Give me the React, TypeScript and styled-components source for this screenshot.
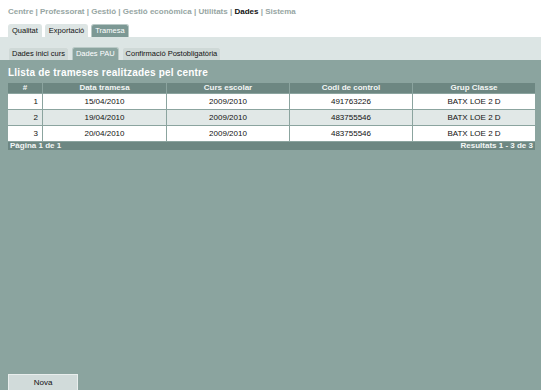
import React from "react";
import styled, { createGlobalStyle } from "styled-components";

const Global = createGlobalStyle`
  html, body { margin: 0; padding: 0; height: 100%; }
  body { font-family: "Liberation Sans", Arial, sans-serif; background: #8ba49f; }
  #root { min-height: 100%; }
`;

const Page = styled.div`
  width: 541px;
  height: 390px;
  display: flex;
  flex-direction: column;
  background: #8ba49f;
  overflow: hidden;
`;

const TopArea = styled.div`
  background: #ffffff;
  padding: 5px 0 0 8px;
`;

const Nav = styled.div`
  font-size: 8px;
  font-weight: bold;
  color: #97a6a3;
  height: 13px;
  line-height: 13px;
`;

const NavItem = styled.span<{ $active?: boolean }>`
  color: ${(p) => (p.$active ? "#111" : "#97a6a3")};
`;

const Sep = styled.span`
  color: #97a6a3;
`;

const TabRow = styled.div`
  display: flex;
  gap: 3px;
  align-items: flex-end;
`;

const TopTabs = styled(TabRow)`
  margin-top: 6px;
`;

const Tab = styled.div<{ $active?: boolean }>`
  font-size: 7.5px;
  height: 12px;
  line-height: 12px;
  padding: 0 3px;
  border-radius: 3px 3px 0 0;
  background: ${(p) => (p.$active ? "#7c9894" : "#dde5e4")};
  color: ${(p) => (p.$active ? "#ffffff" : "#111")};
  border: 1px solid ${(p) => (p.$active ? "#b9c9c6" : "#dde5e4")};
  border-bottom: none;
`;

const SubBand = styled.div`
  background: #dce5e4;
  height: 23px;
  padding: 0 0 0 8px;
  display: flex;
  align-items: flex-end;
`;

const SubTab = styled(Tab)<{ $active?: boolean }>`
  background: ${(p) => (p.$active ? "#8ba49f" : "#cfd9d7")};
`;

const Main = styled.div`
  flex: 1;
  padding: 4px 7px 0 8px;
  display: flex;
  flex-direction: column;
`;

const Title = styled.div`
  color: #ffffff;
  font-weight: bold;
  font-size: 10px;
  letter-spacing: 0.2px;
  height: 17px;
  line-height: 17px;
`;

const Table = styled.table`
  margin-top: 2px;
  width: 527px;
  border-collapse: separate;
  border-spacing: 0 0;
  font-size: 8px;
  table-layout: fixed;
`;

const Th = styled.th`
  background: #6d8782;
  color: #f3f6f5;
  font-weight: bold;
  height: 10px;
  line-height: 10px;
  padding: 0;
  border-right: 1px solid #8ba49f;
  &:last-child { border-right: none; }
`;

const Td = styled.td<{ $alt?: boolean; $right?: boolean }>`
  background: ${(p) => (p.$alt ? "#e1e8e7" : "#ffffff")};
  color: #111;
  height: 15px;
  line-height: 15px;
  padding: 0 4px;
  text-align: ${(p) => (p.$right ? "right" : "center")};
  border-top: 1px solid #8ba49f;
  border-right: 1px solid #8ba49f;
  &:last-child { border-right: none; }
`;

const Footer = styled.td`
  background: #6d8782;
  color: #f3f6f5;
  font-weight: bold;
  height: 8px;
  line-height: 8px;
  padding: 0 2px;
  border-top: 1px solid #8ba49f;
`;

const FooterInner = styled.div`
  display: flex;
  justify-content: space-between;
`;

const Spacer = styled.div`
  flex: 1;
`;

const Button = styled.button`
  width: 70px;
  height: 16px;
  background: #d1dbda;
  border: 1px solid #e9eeed;
  border-bottom: none;
  font-family: "Liberation Sans", Arial, sans-serif;
  font-size: 8px;
  color: #111;
  padding: 0;
  margin: 0;
`;

const rows = [
  ["1", "15/04/2010", "2009/2010", "491763226", "BATX LOE 2 D"],
  ["2", "19/04/2010", "2009/2010", "483755546", "BATX LOE 2 D"],
  ["3", "20/04/2010", "2009/2010", "483755546", "BATX LOE 2 D"],
];

const navItems = ["Centre", "Professorat", "Gestió", "Gestió econòmica", "Utilitats", "Dades", "Sistema"];

export default function App() {
  return (
    <Page>
      <Global />
      <TopArea>
        <Nav>
          {navItems.map((n, i) => (
            <React.Fragment key={n}>
              {i > 0 && <Sep> | </Sep>}
              <NavItem $active={n === "Dades"}>{n}</NavItem>
            </React.Fragment>
          ))}
        </Nav>
        <TopTabs>
          <Tab>Qualitat</Tab>
          <Tab>Exportació</Tab>
          <Tab $active>Tramesa</Tab>
        </TopTabs>
      </TopArea>
      <SubBand>
        <TabRow>
          <SubTab>Dades inici curs</SubTab>
          <SubTab $active>Dades PAU</SubTab>
          <SubTab>Confirmació Postobligatòria</SubTab>
        </TabRow>
      </SubBand>
      <Main>
        <Title>Llista de trameses realitzades pel centre</Title>
        <Table>
          <colgroup>
            <col style={{ width: 35 }} />
            <col style={{ width: 124 }} />
            <col style={{ width: 123 }} />
            <col style={{ width: 123 }} />
            <col style={{ width: 122 }} />
          </colgroup>
          <thead>
            <tr>
              <Th>#</Th>
              <Th>Data tramesa</Th>
              <Th>Curs escolar</Th>
              <Th>Codi de control</Th>
              <Th>Grup Classe</Th>
            </tr>
          </thead>
          <tbody>
            {rows.map((r, i) => (
              <tr key={i}>
                {r.map((c, j) => (
                  <Td key={j} $alt={i === 1} $right={j === 0}>
                    {c}
                  </Td>
                ))}
              </tr>
            ))}
            <tr>
              <Footer colSpan={5}>
                <FooterInner>
                  <span>Pàgina 1 de 1</span>
                  <span>Resultats 1 - 3 de 3</span>
                </FooterInner>
              </Footer>
            </tr>
          </tbody>
        </Table>
        <Spacer />
        <Button>Nova</Button>
      </Main>
    </Page>
  );
}
